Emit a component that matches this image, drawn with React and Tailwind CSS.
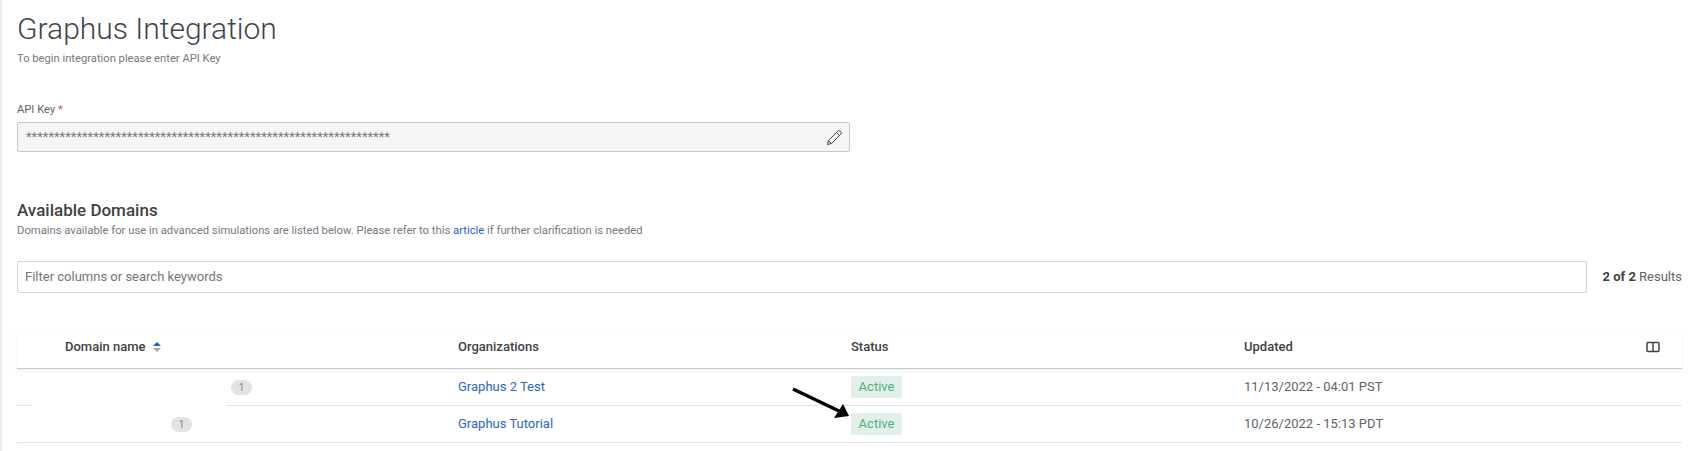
import React from "react";

const rows = [
  { count: 1, pad: "pl-[214px]", org: "Graphus 2 Test", updated: "11/13/2022 - 04:01 PST", patch: true },
  { count: 1, pad: "pl-[154px]", org: "Graphus Tutorial", updated: "10/26/2022 - 15:13 PDT" },
];

const gridCols = "grid grid-cols-[441px_393px_393px_1fr]";

const App = () => {
  return (
    <div className="relative h-[451px] overflow-hidden border-l-2 border-[#eeeeee] bg-white pl-[15px] pr-[15px] font-['Roboto',sans-serif] text-[#424242]">
      <h1 className="pt-[11px] text-[30px] leading-[36px] font-light text-[#3f454d]">Graphus Integration</h1>
      <p className="mt-[5px] text-[11.2px] leading-[13px] text-[#75797e]">To begin integration please enter API Key</p>

      <label className="mt-[38px] block text-[11.2px] leading-[13px] text-[#5f6368]">
        API Key <span className="text-[#d9534f]">*</span>
      </label>
      <div className="mt-[6px] flex h-[30px] w-[833px] items-center justify-between rounded-[2px] border border-[#c8c8c8] bg-[#f5f5f5] pl-2 pr-[6px]">
        <span className="text-[13px] text-[#7a7a7a]">{"*".repeat(65)}</span>
        <svg width="17" height="17" viewBox="0 0 17 17" fill="none" stroke="#444" strokeWidth="1">
          <path d="M1.5 15.5l1-4L11.8 2.2a1.6 1.6 0 0 1 2.3 0l.7.7a1.6 1.6 0 0 1 0 2.3L5.5 14.5z" />
          <path d="M10.5 3.5l3 3M2.5 11.5l3 3" />
        </svg>
      </div>

      <h2 className="mt-[49px] text-[17px] leading-[19px] font-medium text-[#424242]">Available Domains</h2>
      <p className="mt-[4px] text-[11.25px] leading-[13px] text-[#75797e]">
        Domains available for use in advanced simulations are listed below. Please refer to this{" "}
        <a className="text-[#2b5fc7]">article</a> if further clarification is needed
      </p>

      <div className="mt-[24px] flex items-center justify-between">
        <div className="flex h-[32px] w-[1570px] items-center rounded-[2px] border border-[#d4d4d4] bg-white px-[7px] text-[13px] text-[#757575]">
          Filter columns or search keywords
        </div>
        <div className="text-[13px] text-[#5f6368]">
          <span className="font-bold text-[#424242]">2 of 2</span> Results
        </div>
      </div>

      <div className={`${gridCols} mt-[38px] h-[38px] items-center border-b border-[#c8c8c8] pb-[6px] text-[13px] font-medium text-[#424242] shadow-[0_2px_4px_rgba(0,0,0,0.05)]`}>
        <div className="flex items-center gap-[7px] pl-[48px]">
          Domain name
          <svg width="8" height="10" viewBox="0 0 8 10">
            <path d="M4 0l4 4H0z" fill="#1d5fd1" />
            <path d="M4 10l4-4H0z" fill="#a9a9a9" />
          </svg>
        </div>
        <div>Organizations</div>
        <div>Status</div>
        <div className="flex items-center justify-between pr-[22px]">
          Updated
          <svg width="14" height="12" viewBox="0 0 14 12" fill="none" stroke="#424242" strokeWidth="1.5">
            <rect x="1" y="1.5" width="12" height="9" rx="1" />
            <path d="M7 1.5v9" />
          </svg>
        </div>
      </div>

      {rows.map((row) => (
        <div key={row.org} className={`${gridCols} relative h-[37px] items-center border-b border-[#e2e2e2] pb-[1px] text-[13px]`}>
          <div className={row.pad}>
            <span className="inline-flex h-[15px] w-[21px] items-center justify-center rounded-full bg-[#e3e3e3] text-[10px] text-[#7b7f9a]">
              {row.count}
            </span>
          </div>
          <a className="text-[#2b66c9]">{row.org}</a>
          <div>
            <span className="inline-flex h-[22px] w-[51px] items-center justify-center rounded-[2px] bg-[#e2f0e9] text-[#4caf7d]">
              Active
            </span>
          </div>
          <div className="text-[#5f6368]">{row.updated}</div>
          {row.patch && <div className="absolute bottom-[-1px] left-[14px] h-[1px] w-[195px] bg-white" />}
        </div>
      ))}

      {/* arrow annotation on top of the table */}
      <svg className="absolute left-[783px] top-[385px]" width="70" height="36" viewBox="0 0 70 36">
        <path d="M8 4L54 26" stroke="#000" strokeWidth="3.5" />
        <path d="M64 31L49 33L58 19z" fill="#000" />
      </svg>
    </div>
  );
};

export default App;
